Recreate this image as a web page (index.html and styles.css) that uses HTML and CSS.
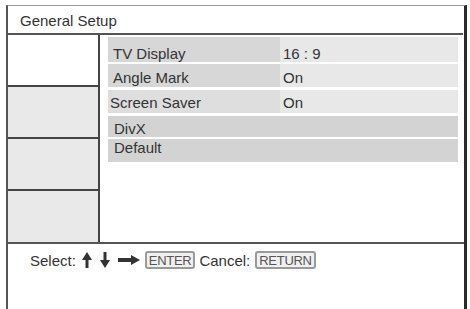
FILE: index.html
```html
<!DOCTYPE html>
<html>
<head>
<meta charset="utf-8">
<link rel="stylesheet" href="styles.css">
</head>
<body>
<div class="frame">
  <div class="header">General Setup</div>
  <div class="main">
    <div class="side">
      <div class="cell cell-white"></div>
      <div class="cell"></div>
      <div class="cell"></div>
      <div class="cell cell-last"></div>
    </div>
    <div class="pane">
      <div class="row r1"><span class="label">TV Display</span><span class="value">16 : 9</span></div>
      <div class="row r2"><span class="label">Angle Mark</span><span class="value">On</span></div>
      <div class="row r3"><span class="label label-light">Screen Saver</span><span class="value">On</span></div>
      <div class="row full r4"><span class="label">DivX</span></div>
      <div class="row full r5"><span class="label">Default</span></div>
    </div>
  </div>
  <div class="footer">
    <span class="ftxt">Select:</span>
    <svg class="ic-up" width="10" height="16" viewBox="0 0 10 16"><path d="M5 0 L10 8 L6.5 8 L6.5 16 L3.5 16 L3.5 8 L0 8 Z" fill="#333"/></svg>
    <svg class="ic-down" width="10" height="16" viewBox="0 0 10 16"><path d="M3.5 0 L6.5 0 L6.5 8 L10 8 L5 16 L0 8 L3.5 8 Z" fill="#333"/></svg>
    <svg class="ic-right" width="22" height="10" viewBox="0 0 22 10"><path d="M0 3 L13 3 L13 0 L22 5 L13 10 L13 7 L0 7 Z" fill="#333"/></svg>
    <span class="key">ENTER</span>
    <span class="ftxt">Cancel:</span>
    <span class="key">RETURN</span>
  </div>
</div>
</body>
</html>
```
FILE: styles.css
```css
* { box-sizing: border-box; }
html, body { margin: 0; padding: 0; background: #fff; }
body { font-family: "Liberation Sans", Arial, sans-serif; color: #333; }

.frame {
  margin: 5px 0 0 6px;
  width: 461px;
  height: 304px;
  border-left: 2px solid #555;
  border-top: 1px solid #999;
  border-right: 3px solid #2a2a2a;
  display: flex;
  flex-direction: column;
}

.header {
  height: 29px;
  padding: 4px 0 0 12px;
  font-size: 15px;
  line-height: 21px;
  border-bottom: 2px solid #555;
  margin-right: 1px;
}

.main {
  display: flex;
  height: 209px;
  border-bottom: 2px solid #555;
}

.side {
  width: 92px;
  border-right: 2px solid #444;
  display: flex;
  flex-direction: column;
}
.cell {
  height: 52px;
  background: #e9e9e9;
  border-bottom: 2px solid #444;
}
.cell-white { background: #fff; height: 52px; }
.cell-last { border-bottom: none; flex: 1; }

.pane {
  flex: 1;
  padding: 2px 6px 0 8px;
  display: flex;
  flex-direction: column;
}

.row {
  display: flex;
  font-size: 15px;
  line-height: 17px;
}
.label {
  width: 172px;
  background: #d7d7d7;
  padding-left: 5px;
}
.label-light { background: #dedede; padding-left: 2px; }
.value {
  flex: 1;
  background: #e8e8e8;
  padding-left: 3px;
}
.full .label { width: auto; flex: 1; background: #d3d3d3; padding-left: 6px; }

.r1 { height: 25px; margin-bottom: 2px; }
.r1 .label, .r1 .value { padding-top: 8px; }
.r2 { height: 23px; margin-bottom: 3px; }
.r2 .label, .r2 .value { padding-top: 5px; }
.r3 { height: 23px; margin-bottom: 3px; }
.r3 .label, .r3 .value { padding-top: 4px; }
.r4 { height: 21px; margin-bottom: 2px; }
.r4 .label { padding-top: 4px; }
.r5 { height: 23px; }
.r5 .label { padding-top: 0px; }

.footer {
  display: flex;
  align-items: center;
  height: 22px;
  margin-top: 5px;
  padding-left: 22px;
  font-size: 15px;
}
.ftxt { line-height: 17px; }
.ic-up { margin-left: 6px; }
.ic-down { margin-left: 8px; }
.ic-right { margin-left: 8px; }
.key {
  margin-left: 5px;
  margin-right: 4px;
  border: 2px solid #9a9a9a;
  border-radius: 3px;
  background: #f0f0f0;
  font-size: 13px;
  line-height: 13px;
  padding: 1px 2px 0 2px;
  color: #555;
  letter-spacing: -0.3px;
}
```
